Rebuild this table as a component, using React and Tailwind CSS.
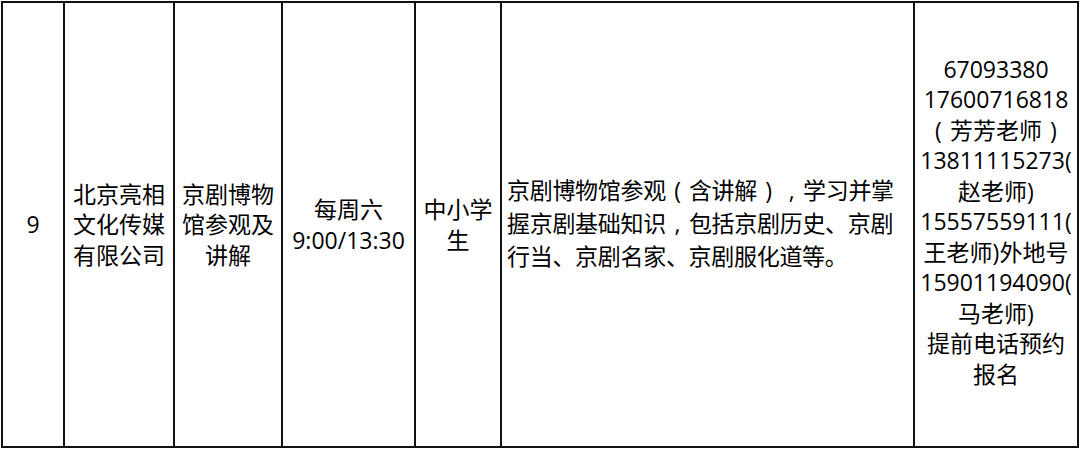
import React from 'react';

const font = { fontFamily: '"Open Sans", "Noto Sans CJK SC", sans-serif' };

// full-width punctuation drawn centred in its em box, as in the source sheet
const P = ({ c }) => <span className="inline-block w-[1em] text-center">{c}</span>;

const Cell = ({ w, align = 'center', last = false, lines, className = '' }) => (
  <div
    className={`${w} h-full shrink-0 flex items-center ${
      align === 'left' ? 'justify-start pl-[5px]' : 'justify-center'
    } ${last ? '' : 'border-r-2 border-[#111]'} ${className}`}
  >
    <div className={align === 'left' ? 'text-left' : 'text-center'}>
      {lines.map((l, i) => (
        <div key={i} className="whitespace-nowrap">
          {l}
        </div>
      ))}
    </div>
  </div>
);

export default function App() {
  return (
    <div className="w-[1080px] h-[450px] bg-white p-[1px]">
      <div
        className="w-[1078px] h-[447px] border-2 border-[#111] flex text-[23px] leading-[30.5px] text-black"
        style={font}
      >
        <Cell w="w-[62px]" lines={['9']} />
        <Cell w="w-[110px]" lines={['北京亮相', '文化传媒', '有限公司']} />
        <Cell w="w-[108px]" lines={['京剧博物', '馆参观及', '讲解']} />
        <Cell w="w-[133px]" lines={['每周六', '9:00/13:30']} />
        <Cell w="w-[86px]" lines={['中小学', '生']} />
        <Cell
          w="w-[413px]"
          align="left"
          className="leading-[33px] pb-[2px] tracking-[-0.3px]"
          lines={[
            <>
              京剧博物馆参观<P c="(" />含讲解<P c=")" />
              <P c="," />学习并掌
            </>,
            <>
              握京剧基础知识<P c="," />包括京剧历史、京剧
            </>,
            '行当、京剧名家、京剧服化道等。',
          ]}
        />
        <Cell
          w="flex-1"
          last
          className="pb-[6px]"
          lines={[
            '67093380',
            '17600716818',
            <>
              <P c="(" />芳芳老师<P c=")" />
            </>,
            '13811115273(',
            '赵老师)',
            '15557559111(',
            '王老师)外地号',
            '15901194090(',
            '马老师)',
            '提前电话预约',
            '报名',
          ]}
        />
      </div>
    </div>
  );
}
